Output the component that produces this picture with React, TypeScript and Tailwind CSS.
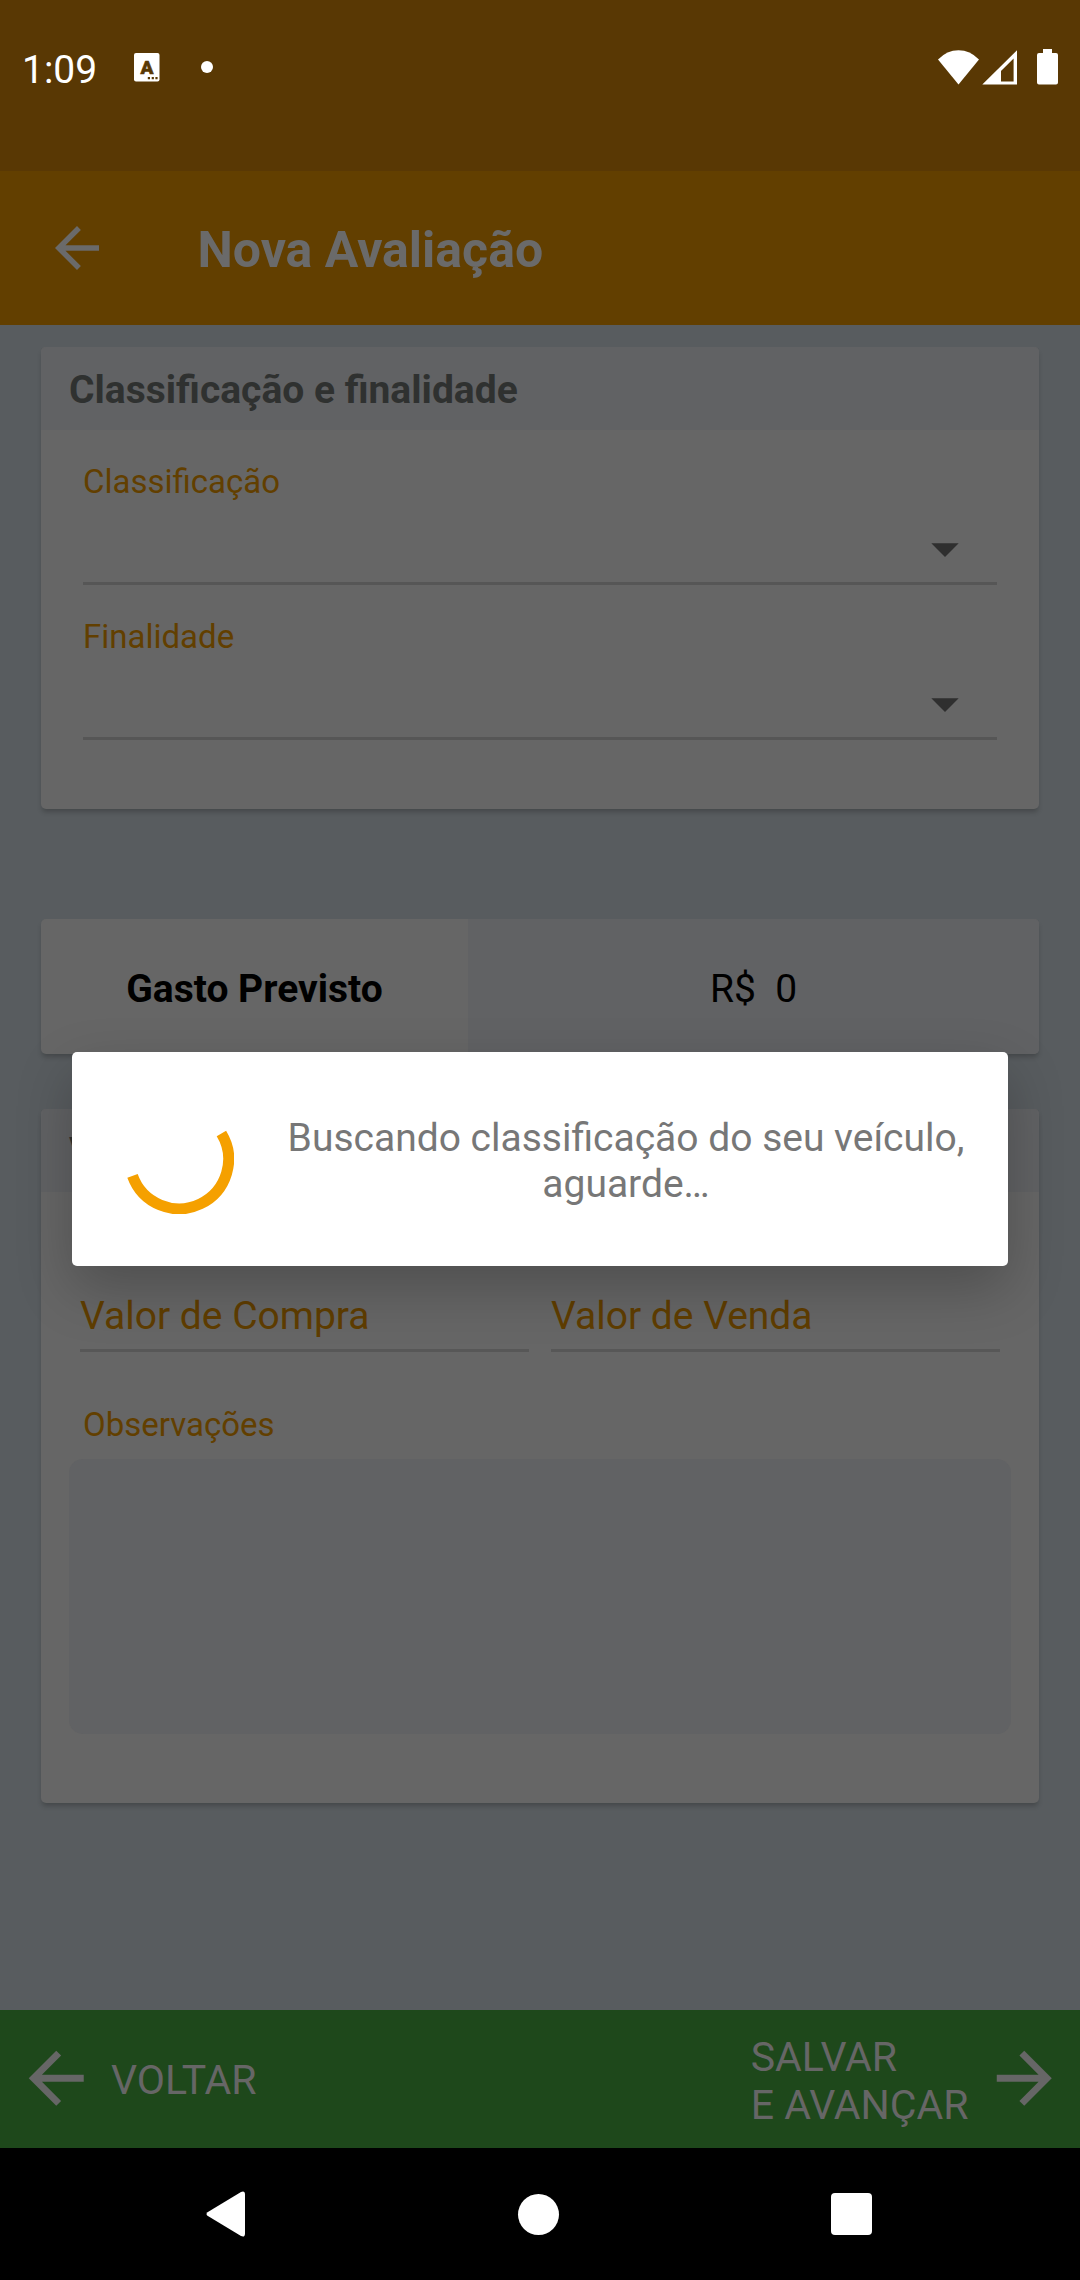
import type { ReactNode } from "react";

const BACK = "M20 11H7.83l5.59-5.59L12 4l-8 8 8 8 1.41-1.41L7.83 13H20v-2z";
const FORWARD = "M12 4l-1.41 1.41L16.17 11H4v2h12.17l-5.58 5.59L12 20l8-8z";

function Icon({ d, className }: { d: string; className: string }) {
  return (
    <svg viewBox="0 0 24 24" className={className} fill="currentColor">
      <path d={d} />
    </svg>
  );
}

function StatusBar() {
  return (
    <div className="flex h-[171px] items-start justify-between bg-[#593804] pt-12 text-white">
      <div className="flex items-start pl-[22px]">
        <span className="w-[75px] text-[39px] leading-[44px]">1:09</span>
        <svg width="26" height="29" viewBox="0 0 26 29" className="mt-[5px] ml-[36.5px]">
          <rect width="25.5" height="28.5" rx="2" fill="#fff" />
          <text x="12.9" y="20.700" textAnchor="middle" fontSize="19" fontWeight="900" fill="#593804" stroke="#593804" strokeWidth="0.6">A</text>
          <path d="M13.8 24h2.2v2.2h-2.2zM17.7 24h2.2v2.2h-2.2zM21.4 24h2.2v2.2h-2.2z" fill="#593804" />
        </svg>
        <span className="mt-[13px] ml-[41px] size-3 rounded-full bg-white" />
      </div>
      <svg width="122" height="40" viewBox="938 48 122 40" className="mr-5 shrink-0" fill="#fff">
        <path d="M938 59.5Q947 50.3 958.5 50.3T979 59.5L958.5 84.5Z" />
        <path fillRule="evenodd" d="M1017 50.3V84.6H982.3ZM1013.6 58.6L1001 71V81.4H1013.6Z" />
        <path d="M1043 49h9v4h4q2 0 2 2v27.600q0 2-2 2h-17q-2 0-2-2V55q0-2 2-2h4z" />
      </svg>
    </div>
  );
}

function Card({ title, children, className }: { title: string; children: ReactNode; className: string }) {
  return (
    <section className={`overflow-hidden rounded-[5px] bg-[#666666] shadow-[0_4px_5px_-1px_rgba(0,0,0,0.22)] ${className}`}>
      <h2 className="flex h-[83px] items-center bg-[#616264] pt-[3px] pl-7 text-[39px] leading-[46px] font-bold text-[#2f3130]">
        {title}
      </h2>
      {children}
    </section>
  );
}

function SelectField({ label }: { label: string }) {
  return (
    <div className="mx-[42px] pt-8">
      <div className="text-[33px] leading-[39px] text-[#623f00]">{label}</div>
      <div className="flex h-[84px] items-end justify-end border-b-[3px] border-[#565656] pr-[38px] pb-[25px]">
        <svg width="28" height="14" viewBox="0 0 28 14" fill="#2f2f2f">
          <path d="M.3.2h27.400L14 14z" />
        </svg>
      </div>
    </div>
  );
}

function MoneyField({ label }: { label: string }) {
  return (
    <div className="flex h-[59px] flex-1 flex-col border-b-[3px] border-[#575757] text-[39px] leading-[46px] text-[#5f3d00]">
      {label}
    </div>
  );
}

export default function App() {
  return (
    <div className="relative flex h-[2280px] w-[1080px] flex-col overflow-hidden bg-[#585c5f] font-['Roboto',sans-serif]">
      <StatusBar />
      <header className="flex h-[154px] items-center bg-[#623f00] pl-11 text-[#6a6a6a]">
        <Icon d={BACK} className="size-[66px]" />
        <h1 className="ml-[87.5px] pt-1 text-[50px] leading-[58px] font-bold">Nova Avaliação</h1>
      </header>

      <main className="flex flex-1 flex-col px-[41px] pt-[22px]">
        <Card title="Classificação e finalidade" className="h-[462px]">
          <SelectField label="Classificação" />
          <SelectField label="Finalidade" />
        </Card>

        <section className="mt-[110px] flex h-[135px] overflow-hidden rounded-[5px] bg-[#666666] text-center text-[39px] leading-[46px] text-black shadow-[0_4px_5px_-1px_rgba(0,0,0,0.22)]">
          <div className="w-[427px] pt-[47px] font-bold">Gasto Previsto</div>
          <div className="flex-1 bg-[#616264] pt-[47px] whitespace-pre">{"R$  0"}</div>
        </section>

        <Card title="Valores" className="mt-[55px] h-[694px]">
          <div className="flex gap-[22px] px-[39px] pt-[101px]">
            <MoneyField label="Valor de Compra" />
            <MoneyField label="Valor de Venda" />
          </div>
          <div className="mt-[53px] ml-[42px] text-[33px] leading-[39px] text-[#623f00]">Observações</div>
          <div className="mx-7 mt-[15px] h-[275px] rounded-[14px] bg-[#616264]" />
        </Card>
      </main>

      <footer className="flex h-[138px] items-center justify-between bg-[#1e481b] pr-[15px] pl-[14.5px] text-[41px] leading-[48px] text-[#666666]">
        <div className="flex items-center">
          <Icon d={BACK} className="mb-px size-[82.5px]" />
          <span className="ml-[14px] pt-px">VOLTAR</span>
        </div>
        <div className="flex items-center">
          <span className="pt-1">SALVAR<br />E AVANÇAR</span>
          <Icon d={FORWARD} className="mb-px ml-[14px] size-[82.5px]" />
        </div>
      </footer>

      <nav className="flex h-[132px] items-center justify-between bg-black pr-[208px] pl-[206px]">
        <svg width="41" height="46" viewBox="0 0 41 46" fill="#fff">
          <path d="M1.500 21.200L35 .9Q39 -.8 39 3.500V42.500Q39 46.800 35 45.100L1.500 24.800Q-.5 23 1.500 21.200z" />
        </svg>
        <span className="size-[41px] rounded-full bg-white" />
        <span className="size-[41.5px] rounded-[4px] bg-white" />
      </nav>

      <div role="dialog" className="absolute top-[1052px] left-[72px] flex h-[214px] w-[936px] rounded-[5px] bg-white shadow-[0_22px_56px_rgba(0,0,0,0.23)]">
        <svg width="110" height="110" viewBox="-55 -55 110 110" className="mt-[52px] ml-[52px] shrink-0">
          <path d="M42.400-25.500A49.500 49.500 0 1 1-46.500 16.900" fill="none" stroke="#f5a000" strokeWidth="11" />
        </svg>
        <p className="ml-[46px] w-[692px] pt-[63px] text-center text-[39px] leading-[46px] text-[#777777]">
          Buscando classificação do seu veículo,<br />aguarde…
        </p>
      </div>
    </div>
  );
}
